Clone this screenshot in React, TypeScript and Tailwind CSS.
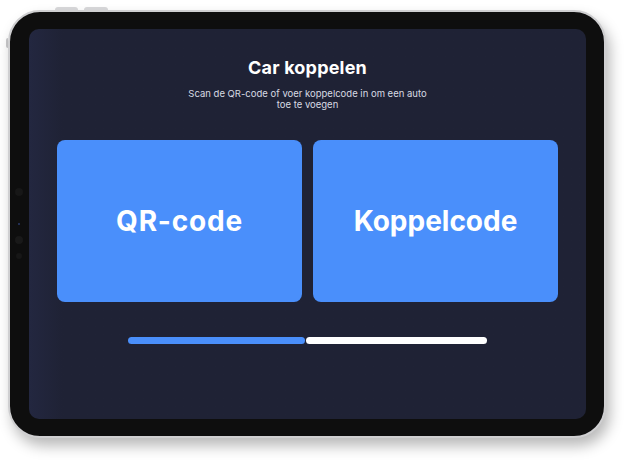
import React from "react"

// Tablet mockup: "Car koppelen" pairing screen
export default function App() {
  return (
    <div className="w-[631px] h-[464px] bg-white relative overflow-hidden" style={{ fontFamily: "Inter, 'Noto Sans', sans-serif" }}>
      {/* hardware buttons */}
      <div className="absolute left-[55px] top-[7px] w-[23px] h-[3px] rounded-t-sm bg-[#d9d9db]" />
      <div className="absolute left-[84px] top-[7px] w-[24px] h-[3px] rounded-t-sm bg-[#d9d9db]" />
      <div className="absolute left-[6px] top-[38px] w-[2px] h-[10px] rounded-l-sm bg-[#c9c9cb]" />

      <div className="pt-[10px] pl-[8px]">
        <div className="w-[598px] h-[428px] rounded-[32px] bg-[#0e0e0e] border-[2px] border-[#cfcfd1] shadow-[4px_8px_14px_rgba(0,0,0,0.28)] flex pt-[17px] pl-[19px] pr-[18px] pb-[17px] relative">
          {/* camera / sensors on left bezel */}
          <div className="absolute left-[5px] top-[176px] w-[8px] h-[8px] rounded-full bg-[#171717]" />
          <div className="absolute left-[8px] top-[211px] w-[2px] h-[2px] rounded-full bg-[#2a3a6a]" />
          <div className="absolute left-[5px] top-[224px] w-[8px] h-[8px] rounded-full bg-[#191919]" />
          <div className="absolute left-[6px] top-[241px] w-[6px] h-[6px] rounded-full bg-[#171717]" />

          <div className="flex-1 rounded-[10px] flex flex-col items-center px-[28px] pt-[28px] bg-gradient-to-r from-[#232740] from-0% via-[#1f2235] via-[6%] to-[#1f2235]">
            <h1 className="text-white font-bold text-[18px] leading-[22px] tracking-[0.2px]">Car koppelen</h1>
            <p className="mt-[9px] text-[#d8dae3] text-[9.5px] leading-[11px] text-center w-[246px]">
              Scan de QR-code of voer koppelcode in om een auto toe te voegen
            </p>
            <div className="mt-[30px] w-full grid grid-cols-2 gap-[11px]">
              <div className="h-[162px] rounded-[8px] bg-[#4a8ffb] flex items-center justify-center">
                <span className="text-white font-bold text-[28px] tracking-[0.8px]">QR-code</span>
              </div>
              <div className="h-[162px] rounded-[8px] bg-[#4a8ffb] flex items-center justify-center">
                <span className="text-white font-bold text-[28px]">Koppelcode</span>
              </div>
            </div>
            <div className="mt-[35px] flex gap-[1px]">
              <div className="w-[177px] h-[7px] rounded-full bg-[#4a8ffb]" />
              <div className="w-[181px] h-[7px] rounded-full bg-white" />
            </div>
          </div>
        </div>
      </div>
    </div>
  )
}
